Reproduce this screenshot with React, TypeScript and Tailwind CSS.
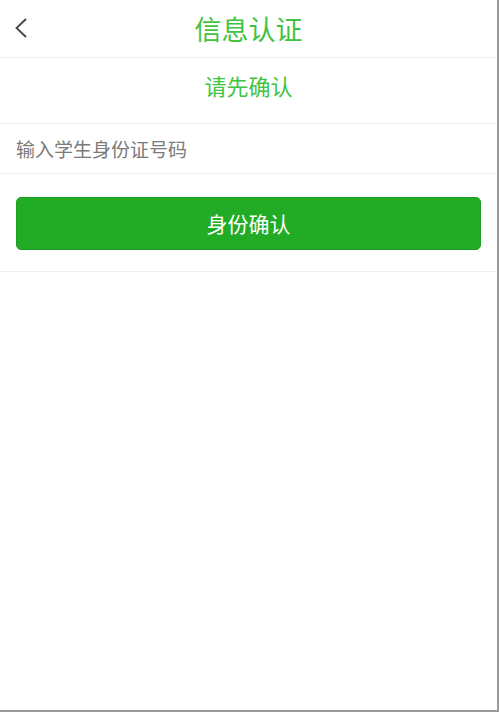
const font = { fontFamily: '"Noto Sans CJK SC", "Liberation Sans", sans-serif' };

export default function App() {
  return (
    <div className="h-[712px] w-[500px] bg-white" style={font}>
      <div className="flex h-full w-[499px] flex-col border-r-2 border-b-2 border-[#9a9a9a] bg-white">
        {/* header */}
        <div className="relative flex h-[58px] items-center justify-center border-b border-[#efefef]">
          <button className="absolute left-[14px] top-[18px]">
            <svg width="14" height="20" viewBox="0 0 14 20" fill="none">
              <polyline points="12,1 2.5,10 12,19" stroke="#444" strokeWidth="1.8" />
            </svg>
          </button>
          <h1 className="text-[27px] leading-none text-[#3fc43f]">信息认证</h1>
        </div>

        <div className="flex h-[66px] justify-center border-b border-[#efefef] pt-[16px]">
          <span className="text-[22px] leading-none text-[#3fc43f]">请先确认</span>
        </div>

        <div className="flex h-[50px] items-center border-b border-[#efefef] px-4">
          <input
            className="w-full bg-transparent text-[19px] leading-none text-[#333] outline-none placeholder:text-[#7a7a7a]"
            placeholder="输入学生身份证号码"
          />
        </div>

        <div className="border-b border-[#efefef] px-4 pt-[23px] pb-[21px]">
          <button className="flex h-[53px] w-full items-center justify-center rounded-[5px] border border-[#1f9f22] bg-[#22ac26] text-[21px] text-white">
            身份确认
          </button>
        </div>
      </div>
    </div>
  );
}
